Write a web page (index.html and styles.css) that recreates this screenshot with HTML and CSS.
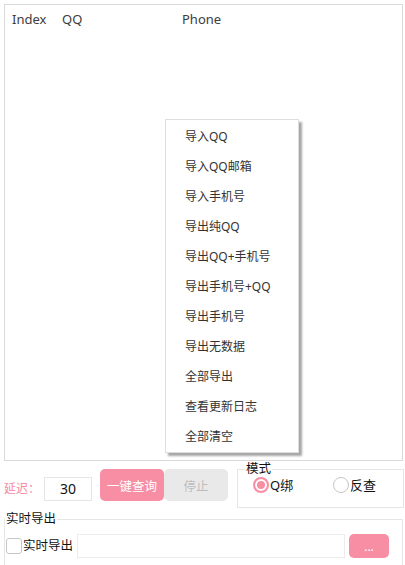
FILE: index.html
```html
<!DOCTYPE html>
<html>
<head>
<meta charset="utf-8">
<link rel="stylesheet" href="styles.css">
</head>
<body>
<div class="main">
  <div class="thead">
    <span class="col col-index">Index</span>
    <span class="col col-qq">QQ</span>
    <span class="col col-phone">Phone</span>
  </div>
</div>

<div class="controls">
  <span class="delay-label">延迟：</span>
  <div class="delay-input">30</div>
  <div class="btn btn-primary btn-query">一键查询</div>
  <div class="btn btn-disabled btn-stop">停止</div>
  <fieldset class="group mode">
    <legend>模式</legend>
    <div class="radios">
      <label class="radio"><span class="dot checked"></span>Q绑</label>
      <label class="radio"><span class="dot"></span>反查</label>
    </div>
  </fieldset>
</div>

<fieldset class="group realtime">
  <legend>实时导出</legend>
  <div class="rt-row">
    <label class="check"><span class="box"></span>实时导出</label>
    <div class="path-input"></div>
    <div class="btn btn-primary btn-browse">...</div>
  </div>
</fieldset>

<ul class="menu">
  <li>导入QQ</li>
  <li>导入QQ邮箱</li>
  <li>导入手机号</li>
  <li>导出纯QQ</li>
  <li>导出QQ+手机号</li>
  <li>导出手机号+QQ</li>
  <li>导出手机号</li>
  <li>导出无数据</li>
  <li>全部导出</li>
  <li>查看更新日志</li>
  <li>全部清空</li>
</ul>
</body>
</html>
```

FILE: styles.css
```css
* { box-sizing: border-box; }
html, body { margin: 0; padding: 0; background: #fff; }
body {
  position: relative;
  width: 405px;
  height: 565px;
  overflow: hidden;
  font-family: "Noto Sans", "Noto Sans CJK SC", sans-serif;
  color: #222;
}

.main {
  margin: 4px 2px 0 4px;
  height: 457px;
  border: 1px solid #d9d9d9;
}
.thead {
  display: flex;
  padding: 5px 0 0 7px;
  font-size: 13px;
  line-height: 18px;
  color: #3c3c3c;
}
.col-index { width: 50px; }
.col-qq { width: 120px; }

.controls {
  display: flex;
  align-items: flex-start;
  height: 49px;
  padding-left: 4px;
}
.delay-label {
  width: 40px;
  margin-top: 20px;
  font-size: 12px;
  line-height: 16px;
  color: #f58ca4;
}
.delay-input {
  width: 48px;
  height: 24px;
  margin-top: 16px;
  border: 1px solid #e6e6e6;
  font-size: 14px;
  line-height: 22px;
  text-align: center;
  color: #111;
}
.btn {
  display: flex;
  align-items: center;
  justify-content: center;
  font-size: 12.5px;
  border-radius: 5px;
}
.btn-query {
  width: 64px;
  height: 32px;
  margin: 8px 0 0 8px;
}
.btn-stop {
  width: 64px;
  height: 32px;
  margin-top: 8px;
}
.btn-primary { background: #f78ea4; color: #fff; }
.btn-disabled { background: #e9e9e9; color: #bdbdbd; }

.group {
  margin: 0;
  padding: 0;
  border: 1px solid #e6e6e6;
  min-width: 0;
}
.group legend {
  padding: 0 1px;
  font-size: 12.5px;
  line-height: 14px;
  color: #111;
}
.mode {
  width: 167px;
  height: 46px;
  margin: 1px 0 0 9px;
}
.mode legend { margin-left: 7px; }
.radios {
  display: flex;
  padding: 1px 0 0 15px;
}
.radio {
  display: flex;
  flex-shrink: 0;
  align-items: center;
  font-size: 13px;
  line-height: 16px;
  color: #111;
  width: 80px;
}
.dot {
  width: 16px;
  height: 16px;
  margin-right: 1px;
  border: 1px solid #c6c6c6;
  border-radius: 50%;
  background: #fff;
}
.dot.checked {
  border: 2px solid #f78ea4;
  box-shadow: inset 0 0 0 2px #fff, inset 0 0 0 8px #f78ea4;
}

.realtime {
  margin: 2px 2px 0 4px;
  height: 60px;
}
.realtime legend { margin-left: 0; padding: 0 1px 0 1px; }
.rt-row {
  display: flex;
  align-items: center;
  padding: 8px 0 0 1px;
}
.check {
  display: flex;
  align-items: center;
  width: 71px;
  font-size: 12.5px;
  line-height: 16px;
  color: #111;
}
.box {
  width: 16px;
  height: 16px;
  margin-right: 1px;
  border: 1px solid #c6c6c6;
  border-radius: 3px;
  background: #fff;
}
.path-input {
  width: 268px;
  height: 24px;
  border: 1px solid #ececec;
}
.btn-browse {
  width: 40px;
  height: 24px;
  margin-left: 4px;
  font-size: 12px;
}

.menu {
  position: absolute;
  left: 165px;
  top: 119px;
  width: 134px;
  margin: 0;
  padding: 2px 0 0;
  height: 334px;
  list-style: none;
  background: #fff;
  border: 1px solid #dedede;
  box-shadow: 3px 3px 2px rgba(0,0,0,0.35);
}
.menu li {
  height: 30px;
  line-height: 30px;
  padding-left: 19px;
  font-size: 12px;
  color: #333;
}
```
